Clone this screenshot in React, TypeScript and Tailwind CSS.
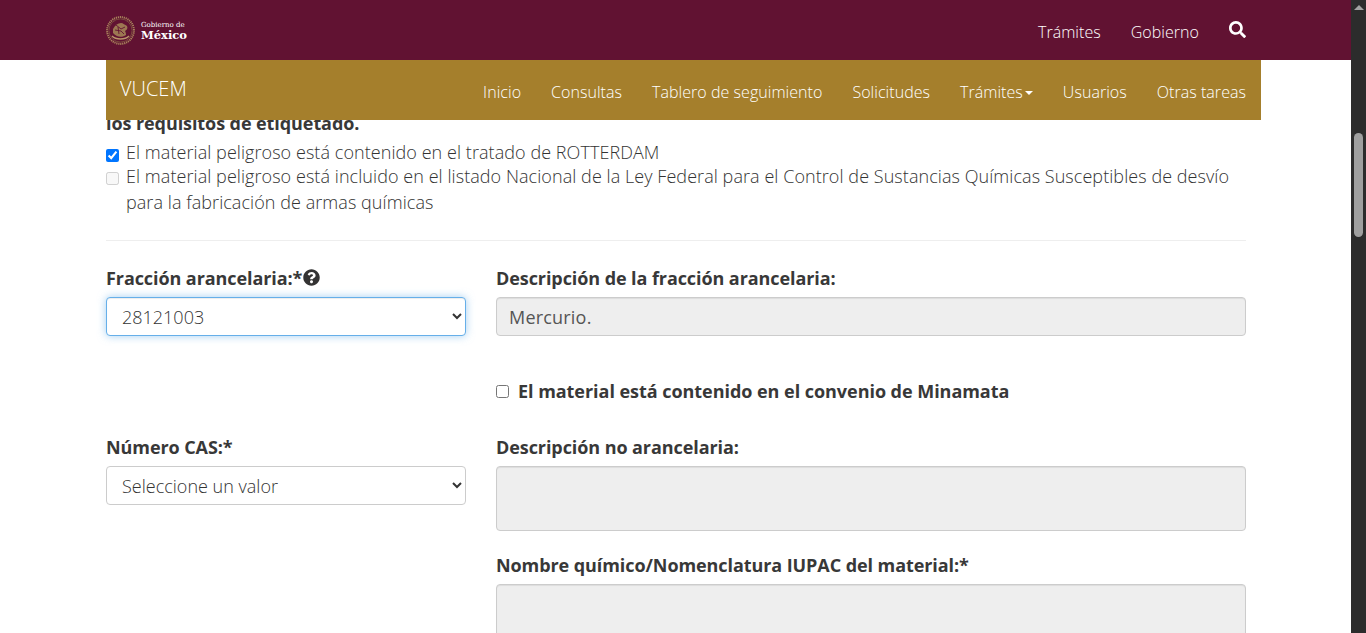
import { FaQuestionCircle, FaSearch } from "react-icons/fa";

const navItems = ["Inicio", "Consultas", "Tablero de seguimiento", "Solicitudes"];

const Logo = () => (
  <div className="flex items-center gap-[6px]">
    <svg width="29" height="29" viewBox="0 0 29 29" fill="none">
      <circle cx="14.5" cy="14.5" r="13.4" stroke="#a9845c" strokeWidth="2" strokeDasharray="1.2 0.8" />
      <circle cx="14.5" cy="14.5" r="11.6" stroke="#7f5540" strokeWidth="0.8" />
      <path d="M7 13c2-4 5-6 8-6 2 0 4 2 6 3 1 2 0 4-2 5 1 2 1 3 1 4-4 3-10 2-13-2 0-1 0-3 0-4z" fill="#9c7752" />
      <path d="M10 9l5 4 4-2M9 14l6 1 3 3M12 11l1 7" stroke="#611232" strokeWidth="0.9" />
      <path d="M6 20c4 4 13 4 17 0" stroke="#b8946a" strokeWidth="1.4" />
    </svg>
    <div className="flex flex-col font-['DejaVu_Serif',serif] text-white">
      <span className="text-[7px] leading-[8px] mt-[1px]">Gobierno de</span>
      <span className="text-[11.5px] leading-[12px] font-bold">México</span>
    </div>
  </div>
);

const Label = ({ children }: { children: React.ReactNode }) => (
  <label className="block text-[18px] leading-[25px] font-bold tracking-[-0.08px] text-[#383838]">{children}</label>
);

const selectClass =
  "w-full h-[39px] bg-white rounded-[4px] border pl-[11px] pr-3 text-[18px] font-light text-[#333] outline-none";

const readonlyClass =
  "block w-full rounded-[4px] border border-[#ccc] bg-[#eee] px-3 text-[#555] shadow-[inset_0_1px_1px_rgba(0,0,0,0.075)]";

export default function App() {
  return (
    <div className="flex h-[633px] overflow-hidden bg-white font-['Open_Sans',sans-serif]">
      <div className="relative flex-1 overflow-hidden">
        <header className="h-[60px] bg-[#611232] pl-[106px] pr-[105px] flex items-center justify-between">
          <Logo />
          <nav className="flex items-center gap-[30px] text-[16px] font-light tracking-[0.04px] text-white">
            <span className="mt-[4px]">Trámites</span>
            <span className="mt-[4px]">Gobierno</span>
            <FaSearch size={17} className="mb-[1px]" />
          </nav>
        </header>

        <div className="relative z-10 ml-[106px] w-[1155px] h-[60px] bg-[#a57f2c] flex items-center justify-between pl-[14px] pr-[15px] text-white">
          <span className="text-[20px] font-light mb-[3px]">VUCEM</span>
          <nav className="flex items-center gap-[30px] text-[16px] font-light tracking-[0.045px] mt-[4px]">
            {navItems.map((item) => (
              <span key={item}>{item}</span>
            ))}
            <span className="flex items-center">
              Trámites
              <span className="ml-[2px] mt-[2px] border-x-[4px] border-t-[4px] border-x-transparent border-t-white" />
            </span>
            <span>Usuarios</span>
            <span>Otras tareas</span>
          </nav>
        </div>

        <main className="ml-[106px] w-[1140px] -mt-[9px] text-[#333]">
          <p className="text-[18px] leading-[25px] font-bold tracking-[-0.08px] text-[#383838]">los requisitos de etiquetado.</p>

          <div className="mt-[4px] text-[18px] leading-[26px] font-light tracking-[0.06px]">
            <label className="flex items-start gap-[7px] h-[23px]">
              <input type="checkbox" defaultChecked className="mt-[9px] ml-0 h-[13px] w-[13px] shrink-0" />
              <span className="leading-[24px]">El material peligroso está contenido en el tratado de ROTTERDAM</span>
            </label>
            <label className="flex items-start gap-[7px]">
              <input type="checkbox" disabled className="mt-[9px] h-[13px] w-[13px] shrink-0" />
              <span>
                El material peligroso está incluido en el listado Nacional de la Ley Federal para el Control de Sustancias Químicas Susceptibles de desvío para la fabricación de armas químicas
              </span>
            </label>
          </div>

          <hr className="mt-[25px] border-[#eee]" />

          <div className="mt-[25px] grid grid-cols-[360px_750px] gap-x-[30px]">
            <div>
              <Label>
                <span className="flex items-center">
                  Fracción arancelaria:*
                  <FaQuestionCircle size={17} className="-mt-[3px] ml-[1px] text-[#333]" />
                </span>
              </Label>
              <select className={`mt-[6px] ${selectClass} border-[#66afe9] shadow-[inset_0_1px_1px_rgba(0,0,0,0.075),0_0_8px_rgba(102,175,233,0.6)]`} defaultValue="28121003">
                <option>28121003</option>
              </select>
            </div>
            <div>
              <Label>Descripción de la fracción arancelaria:</Label>
              <input
                readOnly
                value="Mercurio."
                className={`mt-[6px] h-[39px] text-[18px] font-normal tracking-[0.2px] ${readonlyClass}`}
              />
              <label className="mt-[43px] flex items-center gap-[9px] text-[18px] leading-[25px] font-bold tracking-[-0.04px] text-[#383838]">
                <input type="checkbox" className="h-[13px] w-[13px] shrink-0" />
                El material está contenido en el convenio de Minamata
              </label>
            </div>

            <div className="mt-[31px]">
              <Label>Número CAS:*</Label>
              <select className={`mt-[6px] ${selectClass} border-[#ccc]`}>
                <option>Seleccione un valor</option>
              </select>
            </div>
            <div className="mt-[31px]">
              <Label>Descripción no arancelaria:</Label>
              <div className={`mt-[6px] h-[65px] ${readonlyClass}`} />
              <div className="mt-[22px]">
                <Label>Nombre químico/Nomenclatura IUPAC del material:*</Label>
              </div>
              <div className={`mt-[6px] h-[65px] ${readonlyClass}`} />
            </div>
          </div>
        </main>
      </div>

      <aside className="w-[15px] shrink-0 bg-[#2c2c2c] flex flex-col items-center">
        <span className="mt-[5px] border-x-[5px] border-b-[5px] border-x-transparent border-b-[#a3a3a3]" />
        <span className="mt-[123px] h-[104px] w-[9px] rounded-full bg-[#9f9f9f]" />
      </aside>
    </div>
  );
}
